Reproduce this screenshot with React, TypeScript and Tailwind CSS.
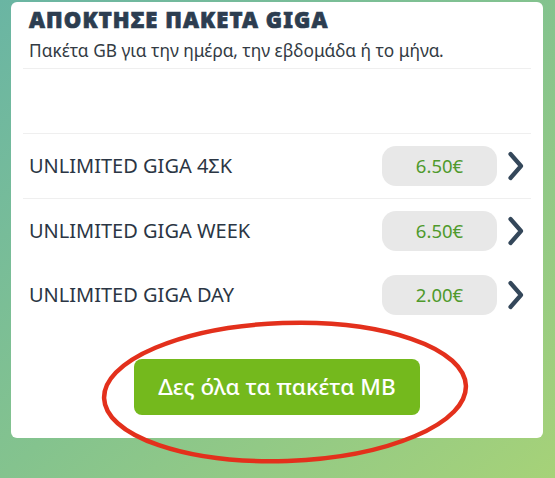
import React from "react";

const rows = [
  { name: "UNLIMITED GIGA 4ΣΚ", price: "6.50€" },
  { name: "UNLIMITED GIGA WEEK", price: "6.50€" },
  { name: "UNLIMITED GIGA DAY", price: "2.00€" },
];

function Chevron() {
  return (
    <svg width="17" height="30" viewBox="0 0 17 30" fill="none">
      <path d="M3.5 3 L14 15 L3.5 27" stroke="#34475a" strokeWidth="4.2" strokeLinecap="round" strokeLinejoin="round" />
    </svg>
  );
}

export default function App() {
  return (
    <div
      className="relative w-[555px] h-[478px] overflow-hidden bg-gradient-to-br from-[#6ab5a3] via-[#84c38e] to-[#a6d278] pt-[2px] px-[11px]"
      style={{ fontFamily: '"Noto Sans", "Open Sans", sans-serif' }}
    >
      <div className="w-[532px] h-[436px] bg-white rounded-[6px] px-[12px] flex flex-col">
        <div className="pl-[6px] pt-[4px]">
          <div className="text-[22px] leading-[26px] font-black text-[#2c3d50] tracking-[1.1px] [-webkit-text-stroke:0.7px_#2c3d50]">ΑΠΟΚΤΗΣΕ ΠΑΚΕΤΑ GIGA</div>
          <div className="text-[17.3px] leading-[24px] text-[#333b44] mt-[7px]">Πακέτα GB για την ημέρα, την εβδομάδα ή το μήνα.</div>
        </div>
        <div className="h-[1px] bg-[#efefef] mt-[5px]" />
        <div className="h-[64px]" />
        <div className="h-[1px] bg-[#efefef]" />
        {rows.map((r, i) => (
          <React.Fragment key={r.name}>
            <div className="h-[64px] flex items-center pl-[6px] pr-[7px]">
              <div className="flex-1 text-[20px] text-[#2b3644]">{r.name}</div>
              <div className="w-[115px] h-[40px] rounded-[14px] bg-[#e8e8e8] flex items-center justify-center text-[18.5px] text-[#4f9a2c]">
                {r.price}
              </div>
              <div className="ml-[10px] flex items-center">
                <Chevron />
              </div>
            </div>
            {i === 0 && <div className="h-[1px] bg-[#efefef]" />}
          </React.Fragment>
        ))}
        <div className="flex justify-center mt-[32px]">
          <div className="w-[286px] h-[56px] rounded-[8px] bg-[#74b91d] flex items-center justify-center text-white text-[22.5px] font-medium">
            Δες όλα τα πακέτα MB
          </div>
        </div>
      </div>
      <svg className="absolute left-0 top-0" width="555" height="478" viewBox="0 0 555 478" fill="none">
        <ellipse cx="285" cy="392" rx="181" ry="69" stroke="#e3301c" strokeWidth="4.5" transform="rotate(-2 285 392)" />
      </svg>
    </div>
  );
}
